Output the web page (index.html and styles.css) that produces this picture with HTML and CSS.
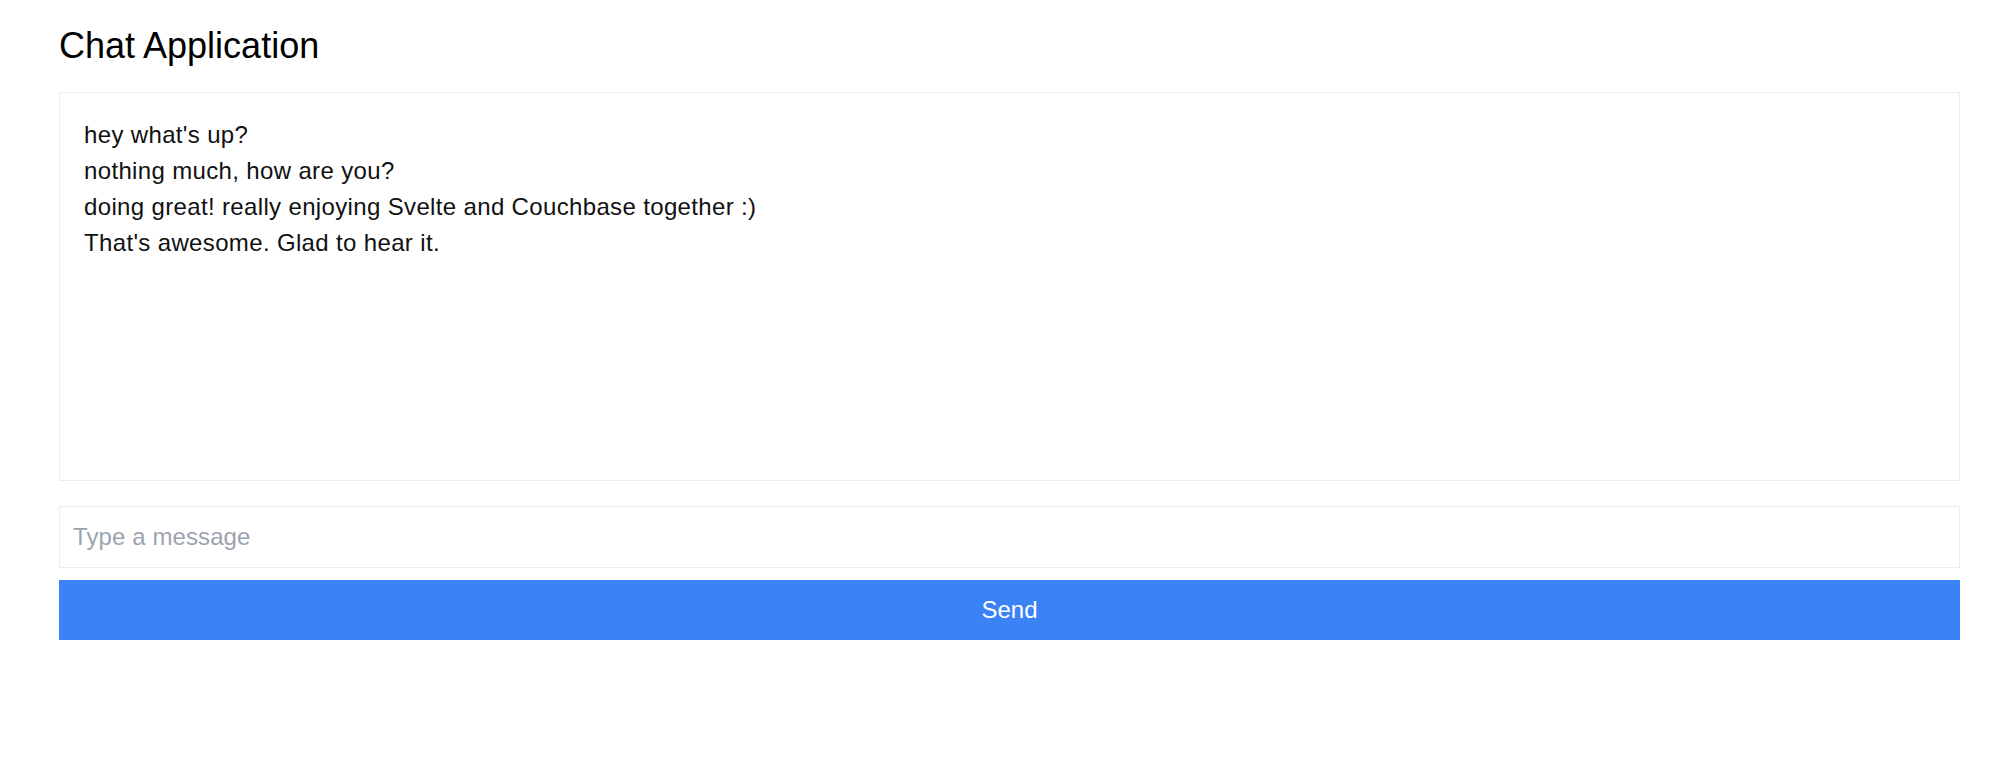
FILE: index.html
```html
<!DOCTYPE html>
<html lang="en">
  <head>
    <meta charset="UTF-8" />
    <meta name="viewport" content="width=device-width, initial-scale=1.0" />
    <title>Chat Application</title>
    <link rel="stylesheet" href="styles.css">
  </head>
  <body>
    <div class="container">
      <h1>Chat Application</h1>

      <div id="messages" class="messages">
        <div class="message">hey what's up?</div>
        <div class="message">nothing much, how are you?</div>
        <div class="message">doing great! really enjoying Svelte and Couchbase together :)</div>
        <div class="message">That's awesome. Glad to hear it.</div>
      </div>

      <input type="text" id="message-input" class="message-input" placeholder="Type a message" />
      <button id="send-btn" class="send-btn">Send</button>
    </div>
  </body>
</html>
```

FILE: styles.css
```css
body {
  margin: 0;
  font-family: "Liberation Sans", Arial, sans-serif;
  background-color: #ffffff;
  color: #000000;
}

.container {
  padding: 22px 39px 0 59px;
}

h1 {
  margin: 0 0 22px 0;
  font-size: 36px;
  line-height: 48px;
  font-weight: 400;
}

.messages {
  height: 339px;
  padding: 24px;
  border: 1px solid #ececec;
  font-size: 24px;
  line-height: 36px;
  letter-spacing: 0.35px;
  color: #111111;
  overflow-y: auto;
}

.message-input {
  display: block;
  width: 100%;
  box-sizing: border-box;
  margin-top: 25px;
  padding: 12px 13px;
  border: 1px solid #ececec;
  font-family: inherit;
  font-size: 24px;
  line-height: 36px;
  letter-spacing: 0.1px;
  color: #000000;
  outline: none;
}

.message-input::placeholder {
  color: #9ca3af;
}

.send-btn {
  display: block;
  width: 100%;
  margin-top: 12px;
  padding: 12px;
  border: none;
  background-color: #3b82f6;
  color: #ffffff;
  font-family: inherit;
  font-size: 24px;
  line-height: 36px;
  cursor: pointer;
}

.send-btn:hover {
  background-color: #2563eb;
}
```
